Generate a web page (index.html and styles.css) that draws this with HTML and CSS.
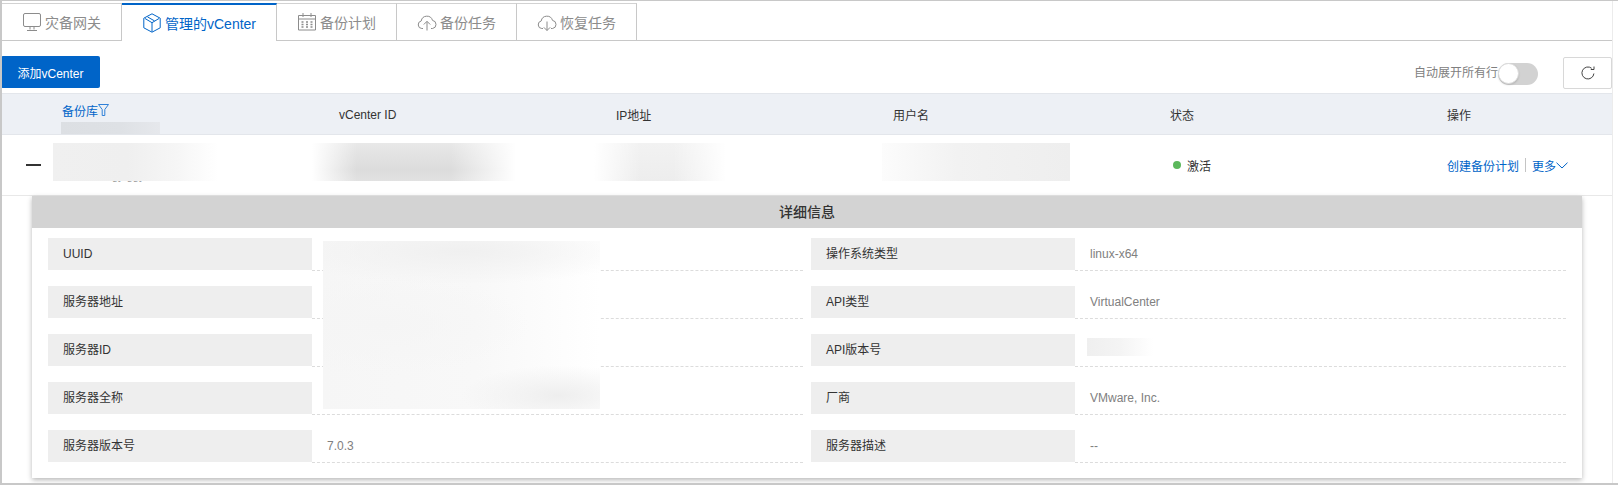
FILE: index.html
```html
<!DOCTYPE html>
<html lang="zh-CN">
<head>
<meta charset="utf-8">
<title>管理的vCenter</title>
<link rel="stylesheet" href="styles.css">
</head>
<body>
<div class="frame">
  <main class="main">
    <nav class="tabs">
      <div class="tab tab-first">
        <svg class="tab-icon" viewBox="0 0 20 20" fill="none" stroke="currentColor"><rect x="1.500" y="1.500" width="17" height="13" rx="1.500"/><path d="M8 15v2.500M12 15v2.500M5 18.500h10"/></svg>
        <span>灾备网关</span>
      </div>
      <div class="tab tab-active">
        <svg class="tab-icon" viewBox="0 0 20 20" fill="none" stroke="currentColor"><path d="M10 .8l8.200 4.400v9.600L10 19.200l-8.200-4.400V5.200z"/><path d="M3 5.500l7 4.200 7-4.200M10 9.700v9"/><path d="M5.500 3.900l7 4"/></svg>
        <span>管理的vCenter</span>
      </div>
      <div class="tab">
        <svg class="tab-icon" viewBox="0 0 20 20" fill="none" stroke="currentColor"><path d="M1.500 3.500h17v14.500h-17zM1.500 7h17M6 1v4M14 1v4"/><path d="M4.500 10h2M9 10h2M13.500 10h2M4.500 12.500h2M9 12.500h2M13.500 12.500h2M4.500 15h2M9 15h2M13.500 15h2" stroke-width="1.400"/></svg>
        <span>备份计划</span>
      </div>
      <div class="tab">
        <svg class="tab-icon" viewBox="0 0 20 20" fill="none" stroke="currentColor"><path d="M6 16.500H4.800a3.800 3.800 0 0 1-.6-7.500 5.800 5.800 0 0 1 11.300-.6 4.100 4.100 0 0 1 .1 8.100H14"/><path d="M10 18.500V9.500M6.800 12.500L10 9.300l3.200 3.200"/></svg>
        <span>备份任务</span>
      </div>
      <div class="tab">
        <svg class="tab-icon" viewBox="0 0 20 20" fill="none" stroke="currentColor"><path d="M6 16.500H4.800a3.800 3.800 0 0 1-.6-7.500 5.800 5.800 0 0 1 11.300-.6 4.100 4.100 0 0 1 .1 8.100H14"/><path d="M10 9.500v9M6.800 15.300L10 18.500l3.200-3.200"/></svg>
        <span>恢复任务</span>
      </div>
    </nav>

    <div class="toolbar">
      <button class="btn-primary" type="button">添加vCenter</button>
      <div class="toolbar-right">
        <span class="toggle-label">自动展开所有行</span>
        <span class="toggle"><span class="knob"></span></span>
        <button class="btn-refresh" type="button" aria-label="刷新">
          <svg class="refresh-icon" viewBox="0 0 14 14" fill="none" stroke="currentColor"><path d="M12.900 7.500a6 6 0 1 1-2.200-5.200"/><path d="M13 .5v3h-3.200"/></svg>
        </button>
      </div>
    </div>

    <div class="grid-row table-head">
      <div></div>
      <div class="head-first">
        <div class="head-link">备份库<svg class="filter-icon" viewBox="0 0 11 12" fill="none" stroke="currentColor"><path d="M.5.500h10L6.800 5.500v6h-2.600v-6z"/></svg></div>
        <div class="head-patch"></div>
      </div>
      <div>vCenter ID</div>
      <div>IP地址</div>
      <div>用户名</div>
      <div>状态</div>
      <div>操作</div>
    </div>

    <div class="grid-row table-row">
      <div class="minus-cell"><span class="minus"></span></div>
      <div class="name-cell"><span class="name-rest">gy ggy</span></div>
      <div></div>
      <div></div>
      <div></div>
      <div class="status"><span class="dot"></span>激活</div>
      <div class="actions"><a class="link">创建备份计划</a><span class="sep"></span><a class="link">更多</a><svg class="chevron" viewBox="0 0 12 7" fill="none" stroke="currentColor"><path d="M.5.700L6 6l5.500-5.300"/></svg></div>
      <div class="patch patch-a"></div>
      <div class="patch patch-b"></div>
      <div class="patch patch-c"></div>
      <div class="patch patch-d"></div>
    </div>

    <section class="detail">
      <h3 class="detail-title">详细信息</h3>
      <div class="detail-body">
        <div class="item"><div class="label">UUID</div><div class="value"></div></div>
        <div class="item"><div class="label">操作系统类型</div><div class="value">linux-x64</div></div>
        <div class="item"><div class="label">服务器地址</div><div class="value"></div></div>
        <div class="item"><div class="label">API类型</div><div class="value">VirtualCenter</div></div>
        <div class="item"><div class="label">服务器ID</div><div class="value"></div></div>
        <div class="item"><div class="label">API版本号</div><div class="value"><div class="patch-version"></div></div></div>
        <div class="item"><div class="label">服务器全称</div><div class="value"></div></div>
        <div class="item"><div class="label">厂商</div><div class="value">VMware, Inc.</div></div>
        <div class="item"><div class="label">服务器版本号</div><div class="value">7.0.3</div></div>
        <div class="item"><div class="label">服务器描述</div><div class="value">--</div></div>
        <div class="patch patch-detail"></div>
      </div>
    </section>
  </main>
</div>
</body>
</html>
```
FILE: styles.css
```css
* { box-sizing: border-box; }
html, body { margin: 0; padding: 0; background: #fff; }
body {
  font-family: "Liberation Sans", "Noto Sans CJK SC", sans-serif;
  font-size: 12px;
  color: #333;
  overflow: hidden;
}
.frame {
  width: 1618px;
  height: 485px;
  border-top: 1px solid #c8c8c8;
  border-left: 2px solid #c8c8c8;
  border-bottom: 2px solid #c8c8c8;
  overflow: hidden;
}
.main {
  width: 1611px;
  height: 100%;
  padding-top: 2px;
  border-right: 1px solid #ececec;
}
.tabs {
  display: flex;
  width: 1610px;
  height: 38px;
  border-bottom: 1px solid #c8c8c8;
}
.tab {
  display: flex;
  align-items: center;
  justify-content: center;
  gap: 3px;
  width: 120px;
  height: 37px;
  border-top: 1px solid #d2d2d2;
  border-right: 1px solid #c8c8c8;
  font-size: 14px;
  color: #8c8c8c;
  background: #fff;
}
.tab-active {
  width: 155px;
  height: 38px;
  border-top: 2px solid #0064c8;
  color: #0064c8;
}
.tab-icon {
  width: 20px;
  height: 20px;
  flex: none;
}
.toolbar {
  display: flex;
  justify-content: space-between;
  align-items: flex-start;
  height: 52px;
  padding-top: 15px;
}
.btn-primary {
  width: 99px;
  height: 32px;
  margin-left: -1px;
  padding: 0;
  border: 0;
  border-radius: 2px;
  background: #0064c8;
  color: #fff;
  font: inherit;
}
.toolbar-right {
  display: flex;
  align-items: center;
}
.toggle-label {
  color: #808080;
  line-height: 34px;
  height: 34px;
}
.toggle {
  display: block;
  width: 40px;
  height: 22px;
  border-radius: 11px;
  background: #d2d2d2;
  margin: 1px 25px 0 0;
}
.knob {
  display: block;
  width: 21px;
  height: 21px;
  border-radius: 50%;
  background: #fff;
  border: 1px solid #dcdcdc;
  box-shadow: 0 1px 2px rgba(0, 0, 0, .15);
}
.btn-refresh {
  display: flex;
  align-items: center;
  justify-content: center;
  width: 49px;
  height: 32px;
  padding: 0;
  background: #fff;
  border: 1px solid #d8d8d8;
  border-radius: 2px;
  color: #444;
}
.refresh-icon { width: 14px; height: 14px; }
.grid-row {
  display: grid;
  grid-template-columns: 60px repeat(5, 277px) 1fr;
  align-items: center;
  position: relative;
}
.table-head {
  height: 42px;
  padding-top: 1px;
  background: #edf0f5;
  border-top: 1px solid #e3e6eb;
  border-bottom: 1px solid #e3e6eb;
  color: #333;
}
.head-first {
  align-self: end;
  display: flex;
  flex-direction: column;
}
.head-link {
  display: flex;
  align-items: flex-start;
  height: 18px;
  line-height: 16px;
  color: #0064c8;
}
.filter-icon {
  width: 11px;
  height: 12px;
  color: #2f80d8;
}
.head-patch {
  width: 99px;
  height: 12px;
  margin-left: -1px;
  background: linear-gradient(90deg, #dcdfe3, #dee1e5 60%, #e6e8ec);
}
.table-row {
  height: 61px;
  border-bottom: 1px solid #e8e8e8;
}
.minus-cell { padding-left: 24px; }
.minus {
  display: block;
  width: 15px;
  height: 2px;
  background: #333;
}
.name-cell {
  align-self: end;
  height: 16px;
  padding: 0 0 0 50px;
  color: #999;
  line-height: 16px;
  font-size: 11px;
  white-space: nowrap;
  margin-bottom: 11px;
}
.status {
  display: flex;
  align-items: center;
  padding-left: 3px;
  color: #333;
}
.dot {
  width: 8px;
  height: 8px;
  border-radius: 50%;
  background: #5cb85c;
  margin-right: 6px;
}
.actions {
  display: flex;
  align-items: center;
}
.link { color: #0064c8; }
.sep {
  width: 1px;
  height: 14px;
  margin: 0 6px;
  background: #c4c4c4;
}
.chevron {
  width: 12px;
  height: 7px;
  color: #0064c8;
}
.patch { position: absolute; }
.patch-a {
  left: 51px;
  top: 8px;
  width: 165px;
  height: 38px;
  background: linear-gradient(90deg, #f0f0f0, #efefef 45%, #f6f6f6 75%, #fff);
}
.patch-b {
  left: 310px;
  top: 8px;
  width: 204px;
  height: 38px;
  background:
    linear-gradient(90deg, #fff, rgba(255, 255, 255, 0) 22%, rgba(255, 255, 255, 0) 68%, #fff),
    linear-gradient(180deg, #e8e8e8, #dcdcdc 70%, #e2e2e2);
}
.patch-c {
  left: 592px;
  top: 8px;
  width: 132px;
  height: 38px;
  background:
    linear-gradient(90deg, #fff, rgba(255, 255, 255, 0) 35%, rgba(255, 255, 255, 0) 60%, #fff),
    linear-gradient(180deg, #f2f2f2, #ededed);
}
.patch-d {
  left: 880px;
  top: 8px;
  width: 188px;
  height: 38px;
  background: linear-gradient(90deg, #fcfcfc, #f2f2f2 40%, #eeeeee 100%);
}
.detail {
  position: relative;
  width: 1550px;
  height: 282px;
  margin-left: 30px;
  background: #fff;
  box-shadow: 0 2px 5px rgba(0, 0, 0, .28);
}
.detail-title {
  margin: 0;
  height: 32px;
  background: #d3d3d3;
  color: #333;
  font-size: 14px;
  font-weight: 500;
  line-height: 32px;
  text-align: center;
}
.detail-body {
  position: relative;
  display: grid;
  grid-template-columns: 755px 755px;
  column-gap: 8px;
  row-gap: 16px;
  align-items: start;
  padding: 10px 16px 16px;
}
.item { display: flex; height: 32px; }
.label {
  flex: none;
  width: 264px;
  height: 32px;
  padding-left: 15px;
  background: #eee;
  line-height: 32px;
}
.value {
  flex: 1;
  position: relative;
  height: 33px;
  padding-left: 15px;
  border-bottom: 1px dashed #dcdcdc;
  color: #808080;
  line-height: 32px;
}
.patch-version {
  position: absolute;
  left: 12px;
  top: 4px;
  width: 66px;
  height: 18px;
  background: linear-gradient(90deg, #efefef, #f4f4f4 50%, #fff);
}
.patch-detail {
  left: 291px;
  top: 13px;
  width: 277px;
  height: 168px;
  background:
    radial-gradient(ellipse 35% 18% at 85% 92%, #eeeeee, rgba(255, 255, 255, 0)),
    radial-gradient(ellipse 65% 20% at 50% 6%, #f0f0f0, rgba(255, 255, 255, 0)),
    radial-gradient(ellipse 55% 30% at 20% 50%, #f5f5f5, rgba(255, 255, 255, 0)),
    linear-gradient(90deg, #f6f6f6, #f8f8f8 55%, #fff 100%);
}
```
